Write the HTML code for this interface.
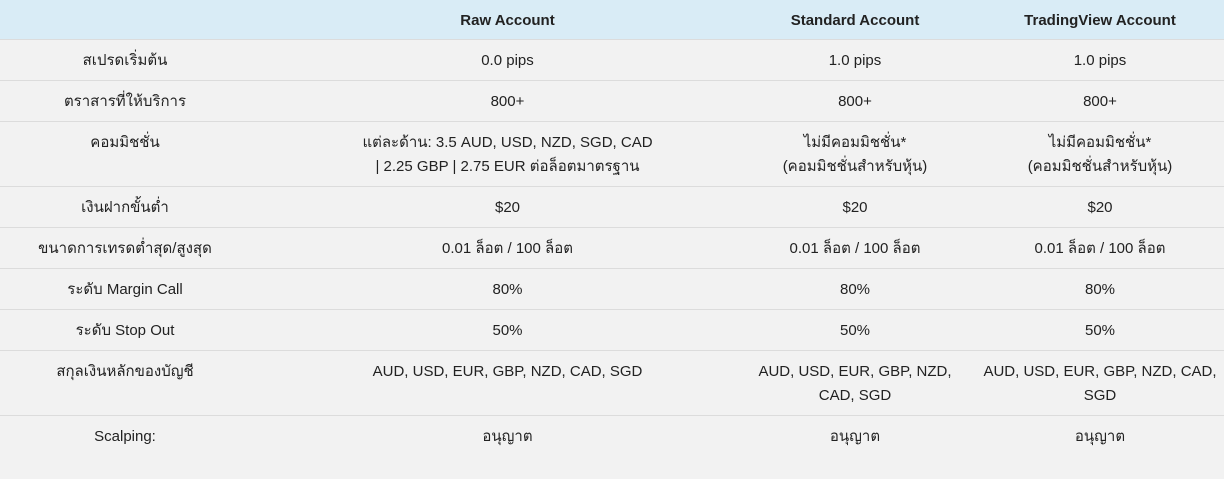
<!DOCTYPE html>
<html><head><meta charset="utf-8"><style>
body{margin:0;width:1224px;height:479px;background:#f2f2f2;font-family:"Liberation Sans","DejaVu Sans",sans-serif;font-size:15px;color:#222;overflow:hidden}
.r{position:absolute;left:0;width:1224px;border-bottom:1px solid #dcdcdc}
.c{position:absolute;top:0;text-align:center;line-height:24px;padding-top:9px}
.a{left:0;width:250px}.b{left:255px;width:505px}.d{left:745px;width:220px}.e{left:975px;width:250px}
.h{background:#d9ecf6;font-weight:bold}
</style></head><body>
<div class="r h" style="top:0;height:39px"><div class="c b">Raw Account</div><div class="c d">Standard Account</div><div class="c e">TradingView Account</div></div>
<div class="r" style="top:40px;height:40px"><div class="c a">สเปรดเริ่มต้น</div><div class="c b">0.0 pips</div><div class="c d">1.0 pips</div><div class="c e">1.0 pips</div></div>
<div class="r" style="top:81px;height:40px"><div class="c a">ตราสารที่ให้บริการ</div><div class="c b">800+</div><div class="c d">800+</div><div class="c e">800+</div></div>
<div class="r" style="top:122px;height:64px"><div class="c a">คอมมิชชั่น</div><div class="c b">แต่ละด้าน: 3.5 AUD, USD, NZD, SGD, CAD<br>| 2.25 GBP | 2.75 EUR ต่อล็อตมาตรฐาน</div><div class="c d">ไม่มีคอมมิชชั่น*<br>(คอมมิชชั่นสำหรับหุ้น)</div><div class="c e">ไม่มีคอมมิชชั่น*<br>(คอมมิชชั่นสำหรับหุ้น)</div></div>
<div class="r" style="top:187px;height:40px"><div class="c a">เงินฝากขั้นต่ำ</div><div class="c b">$20</div><div class="c d">$20</div><div class="c e">$20</div></div>
<div class="r" style="top:228px;height:40px"><div class="c a">ขนาดการเทรดต่ำสุด/สูงสุด</div><div class="c b">0.01 ล็อต / 100 ล็อต</div><div class="c d">0.01 ล็อต / 100 ล็อต</div><div class="c e">0.01 ล็อต / 100 ล็อต</div></div>
<div class="r" style="top:269px;height:40px"><div class="c a">ระดับ Margin Call</div><div class="c b">80%</div><div class="c d">80%</div><div class="c e">80%</div></div>
<div class="r" style="top:310px;height:40px"><div class="c a">ระดับ Stop Out</div><div class="c b">50%</div><div class="c d">50%</div><div class="c e">50%</div></div>
<div class="r" style="top:351px;height:64px"><div class="c a">สกุลเงินหลักของบัญชี</div><div class="c b">AUD, USD, EUR, GBP, NZD, CAD, SGD</div><div class="c d">AUD, USD, EUR, GBP, NZD,<br>CAD, SGD</div><div class="c e">AUD, USD, EUR, GBP, NZD, CAD,<br>SGD</div></div>
<div class="r" style="top:416px;height:62px;border:0"><div class="c a">Scalping:</div><div class="c b">อนุญาต</div><div class="c d">อนุญาต</div><div class="c e">อนุญาต</div></div>
</body></html>
